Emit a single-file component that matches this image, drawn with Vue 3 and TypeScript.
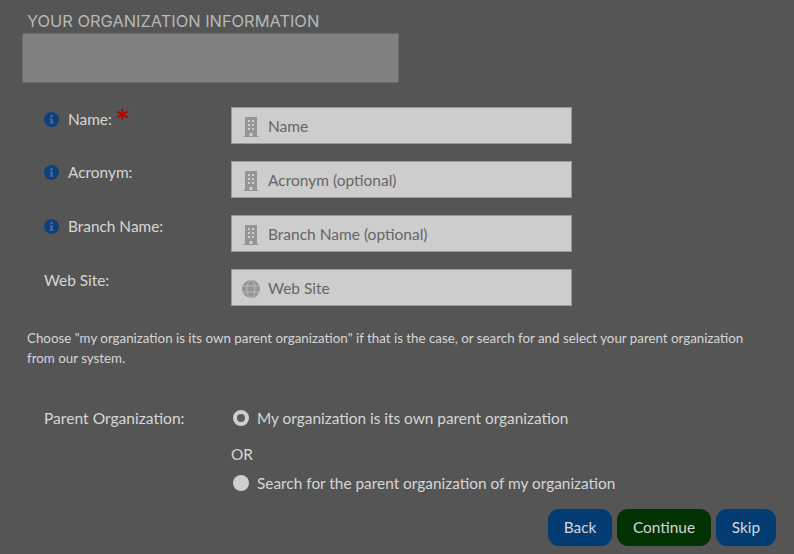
<script setup lang="ts">
interface Field { label: string; placeholder: string; info: boolean; required: boolean; icon: 'building' | 'globe' }
const fields: Field[] = [
  { label: 'Name:', placeholder: 'Name', info: true, required: true, icon: 'building' },
  { label: 'Acronym:', placeholder: 'Acronym (optional)', info: true, required: false, icon: 'building' },
  { label: 'Branch Name:', placeholder: 'Branch Name (optional)', info: true, required: false, icon: 'building' },
  { label: 'Web Site:', placeholder: 'Web Site', info: false, required: false, icon: 'globe' },
]
</script>

<template>
  <main class="page">
    <h1 class="title">YOUR ORGANIZATION INFORMATION</h1>
    <div class="banner"></div>
    <form class="fields" @submit.prevent>
      <div v-for="f in fields" :key="f.label" class="row">
        <div class="label" :class="{ tall: f.required }">
          <svg v-if="f.info" class="info" viewBox="0 0 16 16" width="15" height="15">
            <circle cx="8" cy="8" r="8" fill="#0b4080" />
            <rect x="6.900" y="3.400" width="2.400" height="2.200" fill="#5a6a80" />
            <path d="M6.200 6.800h3.100v4.600h.9v1.200H6v-1.200h.9V8H6.200z" fill="#5a6a80" />
          </svg>
          <span>{{ f.label }}</span>
          <span v-if="f.required" class="req">*</span>
        </div>
        <div class="input">
          <svg v-if="f.icon === 'building'" class="ico" viewBox="0 0 16 20" width="16" height="20">
            <path fill-rule="evenodd" fill="#959595" d="M2 0h12v19h1.500v1H.5v-1H2zM5 3v2h2V3zm4 0v2h2V3zM5 7v2h2V7zm4 0v2h2V7zM5 11v2h2v-2zm4 0v2h2v-2zM6.500 16v3h3v-3z" />
          </svg>
          <svg v-else class="ico globe" viewBox="0 0 18 18" width="18" height="18">
            <circle cx="9" cy="9" r="9" fill="#959595" />
            <g fill="none" stroke="#bcbcbc" stroke-width="1">
              <ellipse cx="9" cy="9" rx="4" ry="9" />
              <path d="M.5 6h17M.5 12h17" />
            </g>
          </svg>
          <span class="ph">{{ f.placeholder }}</span>
        </div>
      </div>
    </form>
    <p class="help">Choose "my organization is its own parent organization" if that is the case, or search for and select your parent organization from our system.</p>
    <div class="parent">
      <div class="plabel">Parent Organization:</div>
      <div class="options">
        <div class="opt"><span class="radio on"></span>My organization is its own parent organization</div>
        <div class="or">OR</div>
        <div class="opt"><span class="radio"></span>Search for the parent organization of my organization</div>
      </div>
    </div>
    <div class="actions">
      <button class="btn blue" type="button">Back</button>
      <button class="btn green" type="button">Continue</button>
      <button class="btn blue" type="button">Skip</button>
    </div>
  </main>
</template>

<style scoped>
.page {
  width: 794px;
  height: 554px;
  box-sizing: border-box;
  overflow: hidden;
  background: #555555;
  font-family: Lato, "Liberation Sans", sans-serif;
  color: #d6d6d6;
  padding: 11px 0 0 22px;
}
.title {
  margin: 0 0 0 5px;
  font-family: Inter, "Liberation Sans", sans-serif;
  font-size: 16.4px;
  line-height: 20px;
  font-weight: 400;
  color: #b8b8b8;
}
.banner {
  width: 377px;
  height: 50px;
  box-sizing: border-box;
  margin-top: 2px;
  background: #808080;
  border: 1px solid #6b6b6b;
  border-radius: 2px;
}
.fields {
  margin-top: 24px;
  display: flex;
  flex-direction: column;
  gap: 17px;
}
.row {
  display: flex;
  align-items: flex-start;
  height: 37px;
}
.label {
  width: 209px;
  box-sizing: border-box;
  padding-left: 22px;
  display: flex;
  align-items: center;
  gap: 9px;
  height: 22px;
  font-size: 15.4px;
}
.label.tall { height: 24px; }
.info { flex: none; }
.req {
  color: #b50000;
  font-family: "DejaVu Sans", sans-serif;
  font-weight: 700;
  font-size: 23px;
  line-height: 22px;
  height: 24px;
  margin-left: -4px;
}
.input {
  width: 341px;
  height: 37px;
  box-sizing: border-box;
  background: #cdcdcd;
  border: 1px solid #9a9a9a;
  display: flex;
  align-items: center;
  position: relative;
  padding-left: 36px;
}
.ico {
  position: absolute;
  left: 11px;
  top: 9px;
}
.ico.globe {
  left: 10px;
  top: 10px;
}
.ph {
  font-size: 15.500px;
  color: #666666;
}
.help {
  margin: 22px 0 0 5px;
  width: 730px;
  font-size: 13.33px;
  line-height: 20px;
}
.parent {
  margin-top: 39px;
  display: flex;
}
.plabel {
  width: 209px;
  box-sizing: border-box;
  padding-left: 22px;
  font-size: 15.6px;
  line-height: 22px;
}
.options {
  font-size: 15.4px;
  line-height: 22px;
}
.opt {
  display: flex;
  align-items: center;
  gap: 8px;
  padding-left: 2px;
}
.or {
  margin-top: 14px;
  margin-bottom: 7px;
}
.radio {
  width: 16px;
  height: 16px;
  border-radius: 50%;
  background: #cfcfcf;
  box-sizing: border-box;
  flex: none;
}
.radio.on {
  border: 4px solid #cfcfcf;
  background: #5c5c5c;
}
.actions {
  position: absolute;
  right: 18px;
  top: 509px;
  display: flex;
  gap: 5px;
}
.btn {
  height: 37px;
  border: none;
  border-radius: 11px;
  font-family: Lato, sans-serif;
  font-size: 15.4px;
  color: #d6d6d6;
  padding: 0 0 2px;
}
.blue { background: #033c73; width: 64px; }
.green { background: #033303; width: 94px; }
.blue:last-child { width: 60px; }
</style>

<style>
body { margin: 0; }
</style>
